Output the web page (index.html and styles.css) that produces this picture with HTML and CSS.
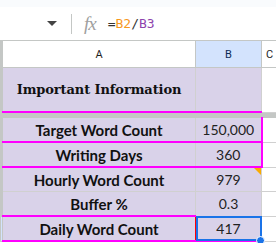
FILE: index.html
```html
<!DOCTYPE html>
<html lang="en">
<head>
  <meta charset="UTF-8">
  <title>Word Count Sheet</title>
  <link rel="stylesheet" href="styles.css">
</head>
<body>

  <div class="top-strip"></div>

  <div class="formula-bar">
    <div class="name-box"><span class="caret"></span></div>
    <div class="bar-sep"></div>
    <span class="fx">fx</span>
    <span class="formula">=<span class="ref-b2">B2</span>/<span class="ref-b3">B3</span></span>
  </div>

  <table class="sheet">
    <colgroup>
      <col class="col-rh">
      <col class="col-a">
      <col class="col-b">
      <col class="col-c">
    </colgroup>
    <tr class="col-head">
      <td class="rh"></td>
      <td>A</td>
      <td class="head-sel">B</td>
      <td class="head-c">C</td>
    </tr>
    <tr class="title-row">
      <td class="rh"></td>
      <td class="a title">Important Information</td>
      <td class="b"></td>
      <td class="c"></td>
    </tr>
    <tr class="freeze">
      <td colspan="4"></td>
    </tr>
    <tr class="row pink-bottom pink-right">
      <td class="rh"></td>
      <td class="a">Target Word Count</td>
      <td class="b">150,000</td>
      <td class="c"></td>
    </tr>
    <tr class="row pink-bottom pink-right">
      <td class="rh"></td>
      <td class="a">Writing Days</td>
      <td class="b">360</td>
      <td class="c"></td>
    </tr>
    <tr class="row">
      <td class="rh"></td>
      <td class="a">Hourly Word Count</td>
      <td class="b note">979<span class="note-mark"></span></td>
      <td class="c"></td>
    </tr>
    <tr class="row buffer">
      <td class="rh"></td>
      <td class="a">Buffer %</td>
      <td class="b">0.3</td>
      <td class="c"></td>
    </tr>
    <tr class="row daily">
      <td class="rh rh-sel"></td>
      <td class="a">Daily Word Count</td>
      <td class="b selected">417<span class="fill-handle"></span></td>
      <td class="c"></td>
    </tr>
  </table>

</body>
</html>
```

FILE: styles.css
```css
body {
  margin: 0;
  width: 276px;
  height: 243px;
  overflow: hidden;
  background-color: #fff;
  font-family: Roboto, Arial, sans-serif;
}

.top-strip {
  height: 7px;
  background-color: #f9fbfd;
}

.formula-bar {
  display: flex;
  align-items: center;
  height: 33px;
}

.name-box {
  width: 71px;
  display: flex;
  justify-content: flex-end;
  padding-right: 14px;
  box-sizing: border-box;
}

.caret {
  width: 0;
  height: 0;
  border-left: 5px solid transparent;
  border-right: 5px solid transparent;
  border-top: 5px solid #444;
}

.bar-sep {
  width: 1px;
  height: 20px;
  background-color: #c4c7c5;
}

.fx {
  margin-left: 12px;
  font-family: "Liberation Serif", serif;
  font-style: italic;
  font-size: 19px;
  color: #a0a0a0;
  letter-spacing: -1px;
}

.formula {
  margin-left: 12px;
  font-family: "DejaVu Sans Mono", monospace;
  font-size: 13px;
  color: #333;
}

.ref-b2 { color: #f7981d; }
.ref-b3 { color: #8e44ad; }

.sheet {
  border-collapse: collapse;
  table-layout: fixed;
  width: 276px;
}

.col-rh { width: 2px; }
.col-a { width: 193px; }
.col-b { width: 66px; }
.col-c { width: 15px; }

.sheet td {
  padding: 0;
  border: 1px solid #d0d0d0;
  overflow: hidden;
  white-space: nowrap;
}

.sheet td.rh {
  background-color: #c4c7c5;
  border-color: #c4c7c5;
}

.sheet td.rh-sel {
  background-color: #d3e3fd;
}

.col-head td {
  height: 26px;
  text-align: center;
  font-size: 11px;
  color: #1f1f1f;
  border-color: #c4c7c5;
  background-color: #fff;
}

.col-head td.head-sel {
  background-color: #d3e3fd;
  color: #0b2a55;
}

.col-head td.head-c {
  text-align: left;
  padding-left: 4px;
  border-right: none;
}

.title-row td {
  height: 43px;
}

.title-row .a,
.title-row .b {
  background-color: #d9d2e9;
  border-bottom: 2px solid #ff00ff;
}

.title {
  text-align: center;
  font-family: "DejaVu Serif", serif;
  font-weight: bold;
  font-size: 13px;
  color: #111;
  letter-spacing: -0.1px;
}

.freeze td {
  height: 4px;
  background-color: #c4c7c5;
  border-color: #c4c7c5;
  border-top: none;
}

.row td {
  height: 23px;
}

.row .a,
.row .b {
  background-color: #d9d2e9;
  text-align: center;
  color: #111;
}

.row .a {
  font-family: Lato, sans-serif;
  font-weight: bold;
  font-size: 15px;
}

.row .b {
  font-family: Lato, sans-serif;
  font-size: 14px;
  color: #222;
}

.row .c {
  background-color: #fff;
  border-right: none;
}

.pink-bottom .a,
.pink-bottom .b {
  border-bottom: 2px solid #ff00ff;
}

.pink-right .b {
  border-right: 2px solid #ff00ff;
}

.buffer .a {
  border-bottom: 2px solid #ff00ff;
}

.buffer .b {
  border-bottom: 1px solid #ff0000;
}

.daily .a {
  border-bottom: 2px solid #ff00ff;
  border-right: 1px solid #ff0000;
}

.daily .b {
  border-bottom: 2px solid #ff00ff;
}

.note,
.selected {
  position: relative;
}

.sheet td.selected {
  overflow: visible;
  outline: 2px solid #1a73e8;
  outline-offset: -2px;
}

.note-mark {
  position: absolute;
  top: 0;
  right: 0;
  width: 0;
  height: 0;
  border-left: 7px solid transparent;
  border-top: 7px solid #f9ab00;
}

.fill-handle {
  position: absolute;
  right: -4px;
  bottom: -5px;
  width: 7px;
  height: 7px;
  border-radius: 50%;
  background-color: #1a73e8;
  border: 1px solid #fff;
  z-index: 2;
}
```
